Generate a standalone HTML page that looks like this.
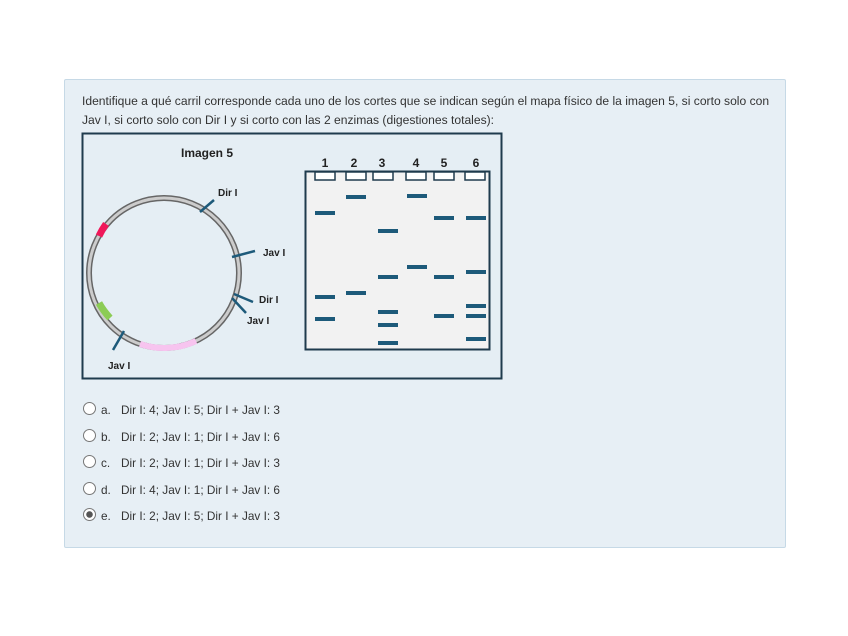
<!DOCTYPE html>
<html><head><meta charset="utf-8"><style>
body{margin:0;width:848px;height:636px;background:#fff;font-family:"Liberation Sans",sans-serif;position:relative;overflow:hidden}
.panel{position:absolute;left:64px;top:79px;width:720px;height:467px;background:#e7eff5;border:1px solid #c6d9e6;border-radius:2px}
.q{position:absolute;left:82px;top:92px;width:720px;font-size:12.1px;line-height:19px;color:#333;white-space:nowrap}
.opt{position:absolute;left:83px;font-size:11.8px;color:#333}
.opt .r{position:absolute;left:0;top:-1px;width:11px;height:11px;border:1px solid #777;border-radius:50%;background:#fff}
.opt .l{position:absolute;left:18px;top:0}
.opt .t{position:absolute;left:38px;top:0;white-space:nowrap}
</style></head><body>
<div class="panel"></div>
<div class="q">Identifique a qué carril corresponde cada uno de los cortes que se indican según el mapa físico de la imagen 5, si corto solo con<br>Jav I, si corto solo con Dir I y si corto con las 2 enzimas (digestiones totales):</div>
<svg style="position:absolute;left:0;top:0" width="848" height="636">
<rect x="82.5" y="133.5" width="419" height="245" fill="#e5eef4" stroke="#1f3b4d" stroke-width="2"/>
<text x="181" y="157" font-size="12" font-weight="bold" fill="#222" font-family="Liberation Sans">Imagen 5</text>
<circle cx="164" cy="273" r="75" fill="none" stroke="#666" stroke-width="6"/>
<circle cx="164" cy="273" r="75" fill="none" stroke="#ccc" stroke-width="3"/>
<path d="M99 236 A75 75 0 0 1 106 224" stroke="#f0185a" stroke-width="7" fill="none"/>
<path d="M99 303 A75 75 0 0 0 110 318" stroke="#8ccc55" stroke-width="7" fill="none"/>
<path d="M140 344 A75 75 0 0 0 196 341" stroke="#f7c4ef" stroke-width="6" fill="none"/>
<g stroke="#1d5a7a" stroke-width="2.5">
<line x1="200" y1="212" x2="214" y2="200"/>
<line x1="232" y1="257" x2="255" y2="251"/>
<line x1="234" y1="294" x2="253" y2="302"/>
<line x1="232" y1="298" x2="246" y2="313"/>
<line x1="124" y1="331" x2="113" y2="350"/>
</g>
<g font-size="10" font-weight="bold" fill="#222" font-family="Liberation Sans">
<text x="218" y="196">Dir I</text><text x="263" y="256">Jav I</text>
<text x="259" y="303">Dir I</text><text x="247" y="324">Jav I</text>
<text x="108" y="369">Jav I</text>
</g>
<rect x="305.5" y="171.5" width="184" height="178" fill="#f2f2f2" stroke="#1f3b4d" stroke-width="2"/>
<g font-size="12" font-weight="bold" fill="#222" font-family="Liberation Sans" text-anchor="middle">
<text x="325" y="167">1</text><text x="354" y="167">2</text><text x="382" y="167">3</text><text x="416" y="167">4</text><text x="444" y="167">5</text><text x="476" y="167">6</text>
</g>
<g fill="#fff" stroke="#1f3b4d" stroke-width="1.5">
<rect x="315" y="172" width="20" height="8"/><rect x="346" y="172" width="20" height="8"/><rect x="373" y="172" width="20" height="8"/><rect x="406" y="172" width="20" height="8"/><rect x="434" y="172" width="20" height="8"/><rect x="465" y="172" width="20" height="8"/>
</g>
<g fill="#1d5a7a">
<rect x="315" y="211" width="20" height="4"/><rect x="315" y="295" width="20" height="4"/><rect x="315" y="317" width="20" height="4"/>
<rect x="346" y="195" width="20" height="4"/><rect x="346" y="291" width="20" height="4"/>
<rect x="378" y="229" width="20" height="4"/><rect x="378" y="275" width="20" height="4"/><rect x="378" y="310" width="20" height="4"/><rect x="378" y="323" width="20" height="4"/><rect x="378" y="341" width="20" height="4"/>
<rect x="407" y="194" width="20" height="4"/><rect x="407" y="265" width="20" height="4"/>
<rect x="434" y="216" width="20" height="4"/><rect x="434" y="275" width="20" height="4"/><rect x="434" y="314" width="20" height="4"/>
<rect x="466" y="216" width="20" height="4"/><rect x="466" y="270" width="20" height="4"/><rect x="466" y="304" width="20" height="4"/><rect x="466" y="314" width="20" height="4"/><rect x="466" y="337" width="20" height="4"/>
</g>
</svg>
<div class="opt" style="top:403px"><span class="r"></span><span class="l">a.</span><span class="t">Dir I: 4; Jav I: 5; Dir I + Jav I: 3</span></div>
<div class="opt" style="top:430px"><span class="r"></span><span class="l">b.</span><span class="t">Dir I: 2; Jav I: 1; Dir I + Jav I: 6</span></div>
<div class="opt" style="top:456px"><span class="r"></span><span class="l">c.</span><span class="t">Dir I: 2; Jav I: 1; Dir I + Jav I: 3</span></div>
<div class="opt" style="top:483px"><span class="r"></span><span class="l">d.</span><span class="t">Dir I: 4; Jav I: 1; Dir I + Jav I: 6</span></div>
<div class="opt" style="top:509px"><span class="r" style="background:radial-gradient(circle,#555 0 3px,#fff 3.5px)"></span><span class="l">e.</span><span class="t">Dir I: 2; Jav I: 5; Dir I + Jav I: 3</span></div>
</body></html>
